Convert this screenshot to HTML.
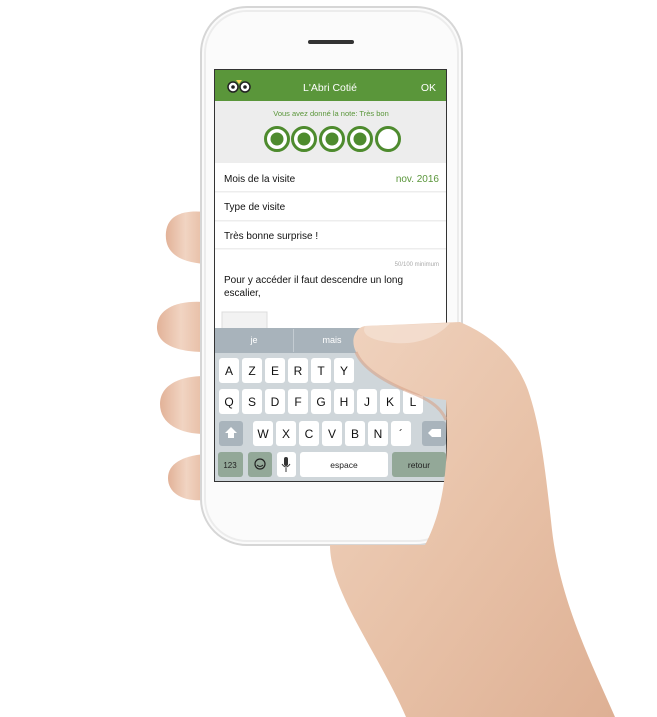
<!DOCTYPE html>
<html><head><meta charset="utf-8"><style>
html,body{margin:0;padding:0;background:#fff;width:657px;height:717px;overflow:hidden}
svg{display:block}
text{font-family:"Liberation Sans",Arial,sans-serif}
</style></head><body>
<svg width="657" height="717" viewBox="0 0 657 717" xmlns="http://www.w3.org/2000/svg">
<defs>
<linearGradient id="sk" x1="0" y1="0" x2="1" y2="1">
<stop offset="0" stop-color="#f0d3bf"/><stop offset="0.5" stop-color="#e8c2a8"/><stop offset="1" stop-color="#deb094"/></linearGradient>
<linearGradient id="fg" x1="0" y1="0" x2="1" y2="0">
<stop offset="0" stop-color="#e2b298"/><stop offset="0.5" stop-color="#f1d4c2"/><stop offset="1" stop-color="#e6bca3"/></linearGradient>
<linearGradient id="th" x1="0" y1="0" x2="0" y2="1">
<stop offset="0" stop-color="#f3dccd"/><stop offset="0.6" stop-color="#e8bea6"/><stop offset="1" stop-color="#dcaa8f"/></linearGradient>
</defs>
<!-- fingers behind phone -->
<g fill="url(#fg)">
<path d="M205 212 C185 210 168 214 166 232 C164 252 178 262 205 264 Z"/>
<path d="M205 302 C178 300 158 308 157 326 C156 344 176 352 205 352 Z"/>
<path d="M205 376 C178 376 160 386 160 404 C160 424 180 434 205 434 Z"/>
<path d="M205 454 C182 456 168 464 168 478 C168 494 184 502 205 500 Z"/>
</g>
<!-- phone body -->
<rect x="201" y="7" width="261" height="538" rx="46" fill="#fbfbfb" stroke="#d6d6d6" stroke-width="2"/>
<rect x="205" y="11" width="253" height="530" rx="42" fill="none" stroke="#ececec" stroke-width="2"/>
<rect x="308" y="40" width="46" height="4" rx="2" fill="#333"/>
<!-- screen -->
<rect x="214" y="69" width="233" height="413" fill="#333"/>
<rect x="215" y="70" width="231" height="411" fill="#fff"/>
<rect x="215" y="70" width="231" height="31" fill="#5a963a"/>
<g fill="#fff" stroke="#222" stroke-width="1.5">
<circle cx="233" cy="87" r="5"/><circle cx="245" cy="87" r="5"/></g>
<circle cx="233" cy="87" r="1.8" fill="#222"/><circle cx="245" cy="87" r="1.8" fill="#222"/>
<path d="M236 80 L239 84 L242 80 Z" fill="#f3d35a"/>
<text x="330" y="91" font-size="10.5" fill="#fff" text-anchor="middle">L'Abri Cotié</text>
<text x="436" y="91" font-size="10.5" fill="#fff" text-anchor="end">OK</text>
<rect x="215" y="101" width="231" height="62" fill="#ededed"/>
<text x="331" y="116" font-size="7.5" fill="#5a963a" text-anchor="middle">Vous avez donné la note: Très bon</text>
<g stroke="#4e8b2e" stroke-width="3" fill="#fff">
<circle cx="277" cy="139" r="11.5"/><circle cx="304" cy="139" r="11.5"/><circle cx="332" cy="139" r="11.5"/><circle cx="360" cy="139" r="11.5"/><circle cx="388" cy="139" r="11.5"/></g>
<g fill="#4e8b2e"><circle cx="277" cy="139" r="6.5"/><circle cx="304" cy="139" r="6.5"/><circle cx="332" cy="139" r="6.5"/><circle cx="360" cy="139" r="6.5"/></g>
<g font-size="10" fill="#111">
<text x="224" y="182">Mois de la visite</text>
<text x="224" y="210">Type de visite</text>
<text x="224" y="239">Très bonne surprise !</text>
<text x="224" y="283">Pour y accéder il faut descendre un long</text>
<text x="224" y="296">escalier,</text>
</g>
<text x="439" y="182" font-size="10" fill="#5a963a" text-anchor="end">nov. 2016</text>
<text x="439" y="266" font-size="6" fill="#aaa" text-anchor="end">50/100 minimum</text>
<g fill="#ededed"><rect x="215" y="191" width="231" height="1.5"/><rect x="215" y="220" width="231" height="1.5"/><rect x="215" y="248" width="231" height="1.5"/></g>
<rect x="222" y="312" width="45" height="18" fill="#f2f2f2" stroke="#ddd"/>
<!-- keyboard -->
<rect x="215" y="328" width="231" height="25" fill="#a8b3bb"/>
<rect x="293" y="329" width="1" height="23" fill="#c4ccd2"/>
<text x="254" y="343" font-size="9" fill="#fff" text-anchor="middle">je</text>
<text x="332" y="343" font-size="9" fill="#fff" text-anchor="middle">mais</text>
<rect x="215" y="353" width="231" height="128" fill="#cfd6da"/>
<g fill="#fff">
<rect x="219" y="358" width="20" height="25" rx="3"/><rect x="242" y="358" width="20" height="25" rx="3"/><rect x="265" y="358" width="20" height="25" rx="3"/><rect x="288" y="358" width="20" height="25" rx="3"/><rect x="311" y="358" width="20" height="25" rx="3"/><rect x="334" y="358" width="20" height="25" rx="3"/>
<rect x="219" y="389" width="20" height="25" rx="3"/><rect x="242" y="389" width="20" height="25" rx="3"/><rect x="265" y="389" width="20" height="25" rx="3"/><rect x="288" y="389" width="20" height="25" rx="3"/><rect x="311" y="389" width="20" height="25" rx="3"/><rect x="334" y="389" width="20" height="25" rx="3"/><rect x="357" y="389" width="20" height="25" rx="3"/><rect x="380" y="389" width="20" height="25" rx="3"/><rect x="403" y="389" width="20" height="25" rx="3"/>
<rect x="253" y="421" width="20" height="25" rx="3"/><rect x="276" y="421" width="20" height="25" rx="3"/><rect x="299" y="421" width="20" height="25" rx="3"/><rect x="322" y="421" width="20" height="25" rx="3"/><rect x="345" y="421" width="20" height="25" rx="3"/><rect x="368" y="421" width="20" height="25" rx="3"/><rect x="391" y="421" width="20" height="25" rx="3"/>
<rect x="277" y="452" width="19" height="25" rx="3"/><rect x="300" y="452" width="88" height="25" rx="3"/>
</g>
<g fill="#a9b4bc"><rect x="219" y="421" width="24" height="25" rx="3"/><rect x="422" y="421" width="24" height="25" rx="3"/></g>
<path d="M231 427 L237 433 L234 433 L234 438 L228 438 L228 433 L225 433 Z" fill="#fff"/>
<path d="M428 433 L432 429 L441 429 L441 437 L432 437 Z" fill="#fff"/>
<g fill="#93a898"><rect x="218" y="452" width="25" height="25" rx="3"/><rect x="248" y="452" width="24" height="25" rx="3"/><rect x="392" y="452" width="54" height="25" rx="3"/></g>
<g font-size="12" fill="#111" text-anchor="middle">
<text x="229" y="375">A</text><text x="252" y="375">Z</text><text x="275" y="375">E</text><text x="298" y="375">R</text><text x="321" y="375">T</text><text x="344" y="375">Y</text>
<text x="229" y="406">Q</text><text x="252" y="406">S</text><text x="275" y="406">D</text><text x="298" y="406">F</text><text x="321" y="406">G</text><text x="344" y="406">H</text><text x="367" y="406">J</text><text x="390" y="406">K</text><text x="413" y="406">L</text>
<text x="263" y="438">W</text><text x="286" y="438">X</text><text x="309" y="438">C</text><text x="332" y="438">V</text><text x="355" y="438">B</text><text x="378" y="438">N</text><text x="401" y="438">´</text>
</g>
<text x="230" y="468" font-size="8" fill="#222" text-anchor="middle">123</text>
<circle cx="260" cy="464" r="5" fill="none" stroke="#222" stroke-width="1.2"/>
<path d="M257 465 Q260 468 263 465" fill="none" stroke="#222" stroke-width="1"/>
<rect x="284" y="457" width="4" height="9" rx="2" fill="#333"/>
<path d="M282 464 Q286 470 290 464 M286 468 L286 472" fill="none" stroke="#333" stroke-width="1"/>
<text x="344" y="468" font-size="8.5" fill="#222" text-anchor="middle">espace</text>
<text x="419" y="468" font-size="8.5" fill="#222" text-anchor="middle">retour</text>
<!-- hand / wrist -->
<path d="M330 545 L425 545 C438 520 446 490 447 440 L446 400 C430 398 410 395 395 385 C378 375 362 365 356 352 C350 340 355 328 365 326 L460 322 C490 335 515 355 528 390 C540 425 545 465 552 530 C560 600 590 660 615 717 L406 717 C390 680 365 640 350 610 C338 585 330 565 330 545 Z" fill="url(#sk)"/>
<path d="M365 326 L450 323 C440 335 420 345 395 343 C375 341 360 336 365 326 Z" fill="#f4e0d2" opacity="0.8"/>
<path d="M356 352 C362 368 385 382 410 392 C425 398 440 405 446 420" fill="none" stroke="#d7a48a" stroke-width="3" opacity="0.6"/>
</svg>
</body></html>
